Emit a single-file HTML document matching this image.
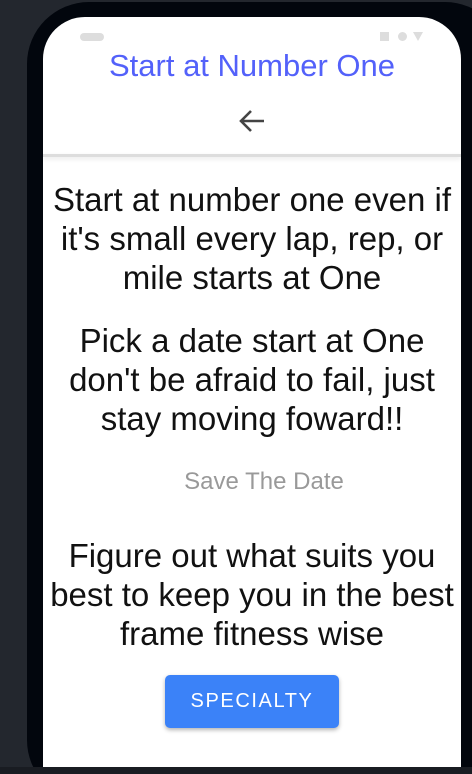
<!DOCTYPE html>
<html style="overflow:hidden;height:774px"><head><style>
body{margin:0;width:472px;height:774px;background:#23272e;overflow:hidden;position:relative;font-family:"Liberation Sans",Arial,sans-serif}
.frame{position:absolute;left:27px;top:2px;width:480px;height:800px;background:#02060d;border-radius:62px}
.screen{position:absolute;left:43px;top:17px;width:418px;height:750px;background:#fff;border-radius:42px 42px 0 0;overflow:hidden}
.bot{position:absolute;left:0;top:767px;width:472px;height:7px;background:#191c22}
.pill{position:absolute;left:37px;top:16px;width:24px;height:8px;border-radius:4px;background:#ddd}
.t{position:absolute;width:418px;left:0;text-align:center;white-space:nowrap}
.body{font-size:33px;line-height:39px;color:#111}
</style></head><body>
<div class="frame"></div>
<div class="screen">
<div class="pill"></div>
<div style="position:absolute;left:337px;top:15px;width:9px;height:9px;background:#ddd"></div>
<div style="position:absolute;left:355px;top:15px;width:9px;height:9px;border-radius:50%;background:#ddd"></div>
<div style="position:absolute;left:370px;top:15px;width:0;height:0;border-left:5px solid transparent;border-right:5px solid transparent;border-top:9px solid #ddd"></div>
<div class="t" style="top:31px;font-size:31px;color:#5361fa">Start at Number One</div>
<svg style="position:absolute;left:195px;top:91px" width="28" height="26" viewBox="0 0 28 26"><path d="M26 13H3M13 3L3 13L13 23" stroke="#444" stroke-width="2.6" fill="none"/></svg>
<div style="position:absolute;left:0;top:137px;width:418px;height:3px;background:#ddd;box-shadow:0 2px 4px rgba(0,0,0,.1)"></div>
<div class="t body" style="top:163px">Start at number one even if<br>it's small every lap, rep, or<br>mile starts at One</div>
<div class="t body" style="top:304px">Pick a date start at One<br>don't be afraid to fail, just<br>stay moving foward!!</div>
<div class="t" style="top:451px;left:12px;font-size:24px;color:#999">Save The Date</div>
<div class="t body" style="top:519px">Figure out what suits you<br>best to keep you in the best<br>frame fitness wise</div>
<div style="position:absolute;left:122px;top:658px;width:174px;height:53px;background:#3b82f8;border-radius:5px;box-shadow:0 2px 4px rgba(0,0,0,.3);color:#fff;font-size:20px;letter-spacing:1.6px;text-align:center;line-height:53px">SPECIALTY</div>
</div>
<div class="bot"></div>
</body></html>
